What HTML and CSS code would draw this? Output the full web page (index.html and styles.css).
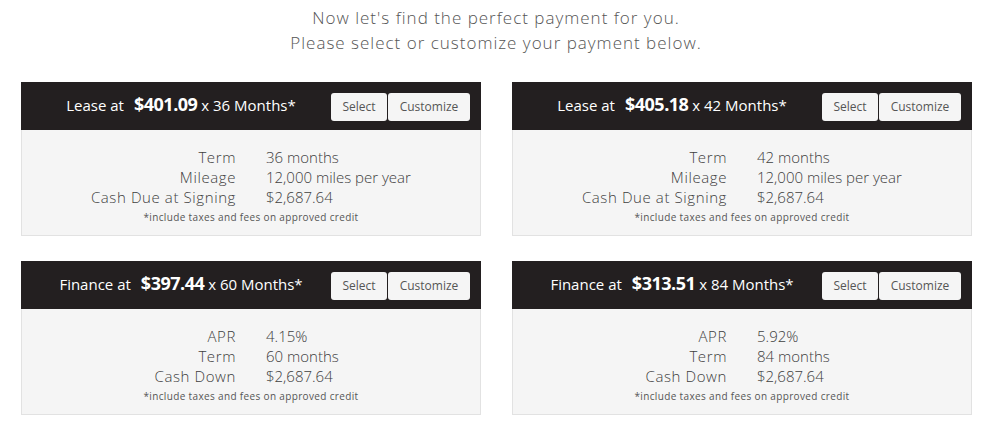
FILE: index.html
```html
<!DOCTYPE html>
<html>
<head>
<meta charset="utf-8">
<link rel="stylesheet" href="styles.css">
</head>
<body>
<div class="page">
  <div class="intro">
    <p>Now let's find the perfect payment for you.</p>
    <p>Please select or customize your payment below.</p>
  </div>
  <div class="grid">
    <div class="card">
      <div class="card-head">
        <div class="title"><span class="kind">Lease at</span><b class="price">$401.09</b> x 36 Months*</div>
        <div class="btns"><button class="btn">Select</button><button class="btn">Customize</button></div>
      </div>
      <div class="card-body">
        <div class="rows">
          <span class="lbl">Term</span><span class="val">36 months</span>
          <span class="lbl">Mileage</span><span class="val">12,000 miles per year</span>
          <span class="lbl">Cash Due at Signing</span><span class="val">$2,687.64</span>
        </div>
        <div class="note">*include taxes and fees on approved credit</div>
      </div>
    </div>
    <div class="card">
      <div class="card-head">
        <div class="title"><span class="kind">Lease at</span><b class="price">$405.18</b> x 42 Months*</div>
        <div class="btns"><button class="btn">Select</button><button class="btn">Customize</button></div>
      </div>
      <div class="card-body">
        <div class="rows">
          <span class="lbl">Term</span><span class="val">42 months</span>
          <span class="lbl">Mileage</span><span class="val">12,000 miles per year</span>
          <span class="lbl">Cash Due at Signing</span><span class="val">$2,687.64</span>
        </div>
        <div class="note">*include taxes and fees on approved credit</div>
      </div>
    </div>
    <div class="card">
      <div class="card-head">
        <div class="title"><span class="kind">Finance at</span><b class="price">$397.44</b> x 60 Months*</div>
        <div class="btns"><button class="btn">Select</button><button class="btn">Customize</button></div>
      </div>
      <div class="card-body">
        <div class="rows">
          <span class="lbl">APR</span><span class="val">4.15%</span>
          <span class="lbl">Term</span><span class="val">60 months</span>
          <span class="lbl">Cash Down</span><span class="val">$2,687.64</span>
        </div>
        <div class="note">*include taxes and fees on approved credit</div>
      </div>
    </div>
    <div class="card">
      <div class="card-head">
        <div class="title"><span class="kind">Finance at</span><b class="price">$313.51</b> x 84 Months*</div>
        <div class="btns"><button class="btn">Select</button><button class="btn">Customize</button></div>
      </div>
      <div class="card-body">
        <div class="rows">
          <span class="lbl">APR</span><span class="val">5.92%</span>
          <span class="lbl">Term</span><span class="val">84 months</span>
          <span class="lbl">Cash Down</span><span class="val">$2,687.64</span>
        </div>
        <div class="note">*include taxes and fees on approved credit</div>
      </div>
    </div>
  </div>
</div>
</body>
</html>
```
FILE: styles.css
```css
* { box-sizing: border-box; }
html, body { margin: 0; padding: 0; background: #fff; }
body {
  font-family: "Open Sans", "Liberation Sans", sans-serif;
  color: #404040;
}
.page { padding: 5px 14px 0 21px; }
.intro {
  text-align: center;
  color: #555;
  font-size: 17px;
  font-weight: 300;
  letter-spacing: 1px;
  line-height: 25px;
  margin-bottom: 27px;
}
.intro p { margin: 0; }
.grid {
  display: grid;
  grid-template-columns: 460px 460px;
  column-gap: 31px;
  row-gap: 25px;
}
.card { display: flex; flex-direction: column; }
.card-head {
  background: #231f20;
  height: 48px;
  display: flex;
  align-items: center;
  padding: 0 11px 0 20px;
  color: #fff;
}
.title {
  flex: 1;
  text-align: center;
  margin-right: 10px;
  padding-bottom: 4px;
  font-size: 15px;
  white-space: nowrap;
}
.kind { margin-right: 10px; }
.price { font-size: 18px; font-weight: 700; letter-spacing: -0.5px; }
.btns { display: flex; gap: 1px; margin-top: 1px; }
.btn {
  font-family: inherit;
  font-size: 12px;
  color: #555;
  background: #f5f5f5;
  border: none;
  border-radius: 3px;
  height: 28px;
  padding: 0;
}
.btn:first-child { width: 56px; }
.btn:last-child { width: 82px; }
.card-body {
  background: #f5f5f5;
  border: 1px solid #e2e2e2;
  border-top: none;
  height: 106px;
  padding-top: 17px;
}
.rows {
  display: grid;
  grid-template-columns: 1fr 1fr;
  column-gap: 30px;
  font-size: 15px;
  font-weight: 300;
  line-height: 20px;
}
.lbl { text-align: right; letter-spacing: 0.6px; }
.note {
  text-align: center;
  font-size: 10px;
  letter-spacing: 0.35px;
  line-height: 14px;
  color: #555;
  margin-top: 3px;
}
```
